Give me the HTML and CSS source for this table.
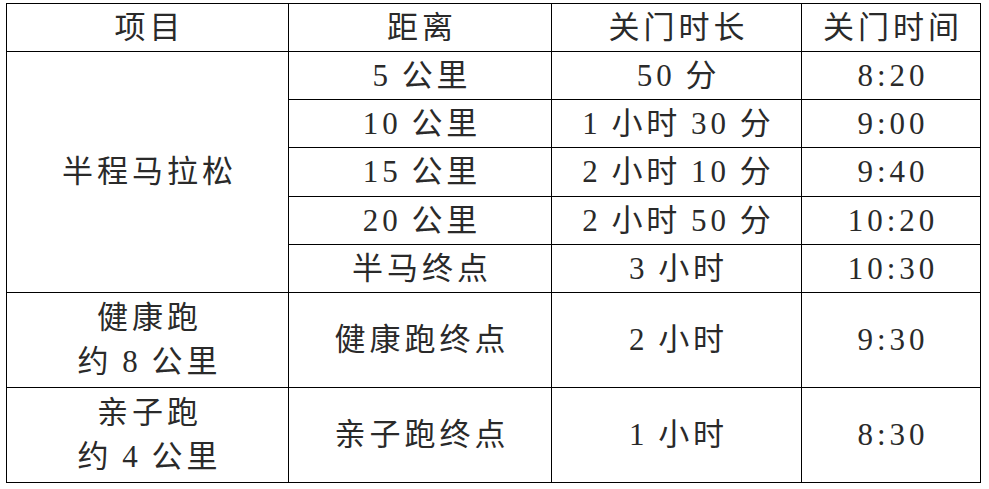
FILE: index.html
```html
<!DOCTYPE html>
<html lang="zh-CN">
<head>
<meta charset="utf-8">
<link rel="stylesheet" href="styles.css">
</head>
<body>
<table class="schedule">
  <colgroup>
    <col class="c1"><col class="c2"><col class="c3"><col class="c4">
  </colgroup>
  <tr class="r48">
    <td>项目</td><td>距离</td><td>关门时长</td><td>关门时间</td>
  </tr>
  <tr class="r48">
    <td rowspan="5">半程马拉松</td><td>5 公里</td><td>50 分</td><td>8:20</td>
  </tr>
  <tr class="r48">
    <td>10 公里</td><td>1 小时 30 分</td><td>9:00</td>
  </tr>
  <tr class="r49">
    <td>15 公里</td><td>2 小时 10 分</td><td>9:40</td>
  </tr>
  <tr class="r48">
    <td>20 公里</td><td>2 小时 50 分</td><td>10:20</td>
  </tr>
  <tr class="r48">
    <td>半马终点</td><td>3 小时</td><td>10:30</td>
  </tr>
  <tr class="r95">
    <td class="two">健康跑<br>约 8 公里</td><td>健康跑终点</td><td>2 小时</td><td>9:30</td>
  </tr>
  <tr class="r95">
    <td class="two">亲子跑<br>约 4 公里</td><td>亲子跑终点</td><td>1 小时</td><td>8:30</td>
  </tr>
</table>
</body>
</html>
```
FILE: styles.css
```css
html, body {
  margin: 0;
  padding: 0;
  background: #fff;
}
body {
  padding: 3px 0 0 6px;
}
.schedule {
  border-collapse: collapse;
  table-layout: fixed;
  width: 975px;
  font-family: "Liberation Serif", "DejaVu Serif", "Noto Sans CJK SC", serif;
  font-weight: 400;
  font-size: 31px;
  color: #2a2a2a;
}
.c1 { width: 282px; }
.c2 { width: 263px; }
.c3 { width: 250px; }
.c4 { width: 179px; }
.schedule td {
  border: 1.5px solid #000;
  text-align: center;
  vertical-align: middle;
  padding: 0 0 0 4px;
  letter-spacing: 4px;
  word-spacing: -2px;
  line-height: 44px;
  white-space: nowrap;
}
.r48 { height: 48px; }
.r49 { height: 49px; }
.r95 { height: 95px; }
```
